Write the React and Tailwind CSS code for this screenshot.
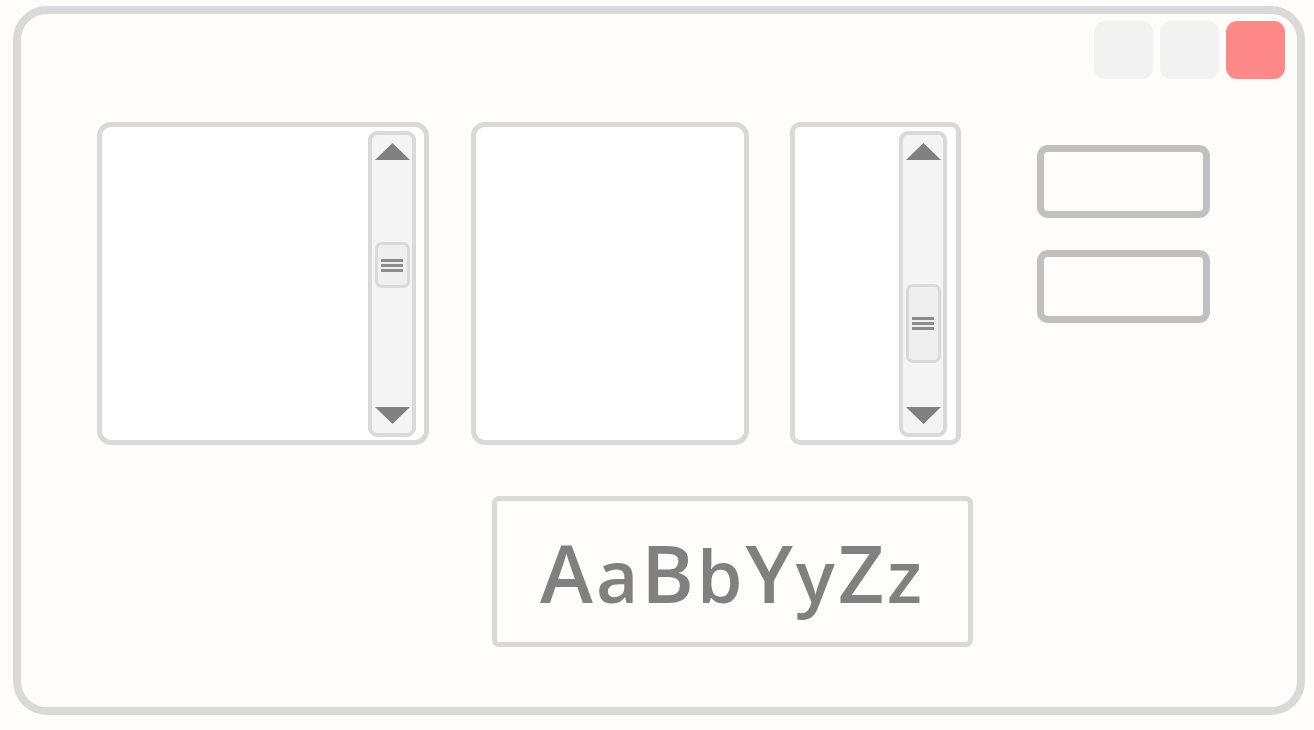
import React from "react";

function Arrow({ down }) {
  return (
    <svg width="35" height="17" viewBox="0 0 35 17" className="block shrink-0">
      {down ? (
        <polygon points="0,0 35,0 17.5,17" fill="#808080" />
      ) : (
        <polygon points="17.5,0 35,17 0,17" fill="#808080" />
      )}
    </svg>
  );
}

function Thumb({ h }) {
  return (
    <div
      className={`w-[35px] ${h} rounded-[7px] border-[3px] border-solid border-[#dadada] bg-[#efefef] flex flex-col items-center justify-center gap-[2px]`}
    >
      <div className="w-[22px] h-[3px] bg-[#8c8c8c]" />
      <div className="w-[22px] h-[3px] bg-[#8c8c8c]" />
      <div className="w-[22px] h-[3px] bg-[#8c8c8c]" />
    </div>
  );
}

function Scrollbar({ thumbTop, thumbH }) {
  return (
    <div className="w-[48px] h-[306px] rounded-[9px] border-4 border-solid border-[#d9d9d9] bg-[#f4f4f4] flex flex-col items-center pt-[8px] pb-[9px]">
      <Arrow />
      <div className="flex-1 w-full flex flex-col items-center">
        <div className={thumbTop} />
        <Thumb h={thumbH} />
      </div>
      <Arrow down />
    </div>
  );
}

export default function App() {
  return (
    <div className="w-[1314px] h-[730px] bg-[#fffcf9] pl-[13px] pt-[6px]">
      <div className="w-[1292px] h-[709px] rounded-[34px] border-8 border-solid border-[#d9d9d9] bg-[#fffcf9] flex flex-col">
        {/* title buttons */}
        <div className="flex justify-end gap-[7px] pt-[7px] pr-[12px]">
          <div className="w-[59px] h-[58px] rounded-[11px] bg-[#f2f2f2]" />
          <div className="w-[59px] h-[58px] rounded-[11px] bg-[#f2f2f2]" />
          <div className="w-[59px] h-[58px] rounded-[11px] bg-[#ff8888]" />
        </div>

        {/* main row */}
        <div className="flex items-start mt-[43px] ml-[76px]">
          <div className="w-[332px] h-[323px] rounded-[14px] border-[5px] border-solid border-[#d9d9d9] bg-white flex justify-end items-start pt-[4px] pr-[8px]">
            <Scrollbar thumbTop="h-[82px]" thumbH="h-[46px]" />
          </div>
          <div className="ml-[42px] w-[278px] h-[323px] rounded-[14px] border-[5px] border-solid border-[#d9d9d9] bg-white" />
          <div className="ml-[41px] w-[171px] h-[323px] rounded-[10px] border-[5px] border-solid border-[#d9d9d9] bg-white flex justify-end items-start pt-[4px] pr-[9px]">
            <Scrollbar thumbTop="h-[124px]" thumbH="h-[79px]" />
          </div>
          <div className="ml-[76px] mt-[23px] flex flex-col gap-[32px]">
            <div className="w-[173px] h-[73px] rounded-[11px] border-[7px] border-solid border-[#c0c0c0]" />
            <div className="w-[173px] h-[73px] rounded-[11px] border-[7px] border-solid border-[#c0c0c0]" />
          </div>
        </div>

        {/* font preview */}
        <div className="ml-[471px] mt-[51px] w-[481px] h-[151px] rounded-[7px] border-[5px] border-solid border-[#d9d9d9] bg-[#fffdfb] flex items-center justify-center">
          <span
            className="text-[80px] leading-none text-[#808080] font-semibold tracking-[3px]"
            style={{ fontFamily: '"Open Sans", sans-serif' }}
          >
            A<span className="text-[73px]">a</span>B<span className="text-[73px]">b</span>Y<span className="text-[73px]">y</span>Z<span className="text-[73px]">z</span>
          </span>
        </div>
      </div>
    </div>
  );
}
